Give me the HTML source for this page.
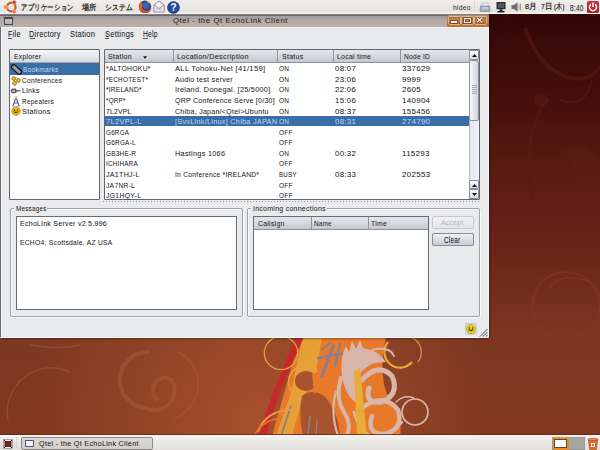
<!DOCTYPE html>
<html><head><meta charset="utf-8">
<style>
*{margin:0;padding:0;box-sizing:border-box}
html,body{width:600px;height:450px;overflow:hidden;font-family:"Liberation Sans",sans-serif}
body{position:relative;background:#6a2616}
.a{position:absolute}
.t{position:absolute;white-space:nowrap;transform-origin:0 50%;-webkit-text-stroke:0.04px currentColor}
#wall{left:0;top:0;width:600px;height:450px;background:linear-gradient(180deg,#2c0505 0%,#3e0c08 20%,#5a1a10 45%,#7a3220 70%,#8c4028 100%)}
</style></head><body>
<svg class="a" style="left:0;top:0" width="600" height="450" viewBox="0 0 600 450">
<defs>
 <linearGradient id="bg" x1="0" y1="0" x2="0" y2="1">
  <stop offset="0" stop-color="#2e0606"/>
  <stop offset="0.22" stop-color="#460f0a"/>
  <stop offset="0.40" stop-color="#5c1c13"/>
  <stop offset="0.58" stop-color="#6c2618"/>
  <stop offset="0.76" stop-color="#7e3822"/>
  <stop offset="1" stop-color="#82381f"/>
 </linearGradient>
 <radialGradient id="glow" cx="260" cy="420" r="230" gradientUnits="userSpaceOnUse">
  <stop offset="0" stop-color="#a8502c" stop-opacity="1"/>
  <stop offset="1" stop-color="#a4522c" stop-opacity="0"/>
 </radialGradient>
</defs>
<rect width="600" height="450" fill="url(#bg)"/>
<rect width="600" height="450" fill="url(#glow)"/>
<!-- faint swirls -->
<g fill="none" stroke="#a85c38" stroke-opacity="0.5">
 <path d="M158 400 A12 12 0 1 1 172 380 A20 20 0 0 1 146 408 A28 28 0 0 1 150 352" stroke-width="4"/>
 <path d="M178 352 A36 36 0 0 1 175 418" stroke-width="1.5"/>
 <path d="M8 420 A44 44 0 0 1 70 372" stroke-width="1.5"/>
 <path d="M30 345 Q60 350 80 345" stroke-width="1.5"/>
</g>
<g fill="none" stroke="#5a1a14" stroke-opacity="0.6">
 <path d="M525 28 Q540 70 570 78 Q592 82 600 66" stroke-width="4"/>
 <path d="M548 98 Q522 130 532 200" stroke-width="3"/>
 <path d="M560 100 Q585 110 592 80" stroke-width="2"/>
</g>
<circle cx="541" cy="100" r="7" fill="#5a1a14" opacity="0.5"/>
<path d="M565 150 Q585 140 600 160 L600 200 Q580 195 565 150Z" fill="#5e1e16" opacity="0.45"/>
<g fill="none" stroke="#8a3626" stroke-opacity="0.55">
 <circle cx="566" cy="306" r="34" stroke-width="2.2"/>
 <path d="M548 290 Q560 270 590 282" stroke-width="1.5"/>
</g>
<!-- central art -->
<path d="M300 337 L386 337 Q380 360 384 385 Q388 400 398 412 Q402 428 400 436 L272 436 Z" fill="#e8782a"/>
<path d="M303 337 L322 337 L316 372 L302 400 L292 436 L276 436 L290 396 Z" fill="#e6a038"/>
<path d="M296 337 L304 337 L280 390 L266 436 L258 436 L274 390 Z" fill="#c6282c"/>
<path d="M302 396 Q312 388 324 396 Q338 410 340 436 L303 436 Q298 414 302 396Z" fill="#a8522e"/>
<ellipse cx="306" cy="381" rx="11" ry="10" fill="#a8522e"/>
<path d="M312 372 Q322 376 322 388 L314 394 Z" fill="#e8782a"/>
<g fill="none" stroke="#8c7e88" stroke-linecap="round">
 <path d="M333 346 L322 376" stroke-width="3"/>
 <path d="M340 344 L335 366" stroke-width="2.5"/>
 <path d="M318 358 L346 353" stroke-width="2.4"/>
 <path d="M322 350 L330 343" stroke-width="2"/>
 <path d="M281 436 L291 406" stroke-width="1.8"/>
 <path d="M308 436 L310 416" stroke-width="1.6"/>
 <path d="M316 436 L317 420" stroke-width="1.4"/>
</g>
<g fill="none" stroke-width="1.3">
 <circle cx="281" cy="353" r="16.7" stroke="#e0a040"/>
 <path d="M292 392 A14 14 0 0 1 318 372" stroke="#eaa040" stroke-width="1.5"/>
 <path d="M388 342 A13 13 0 0 0 412 362" stroke="#e8a838" stroke-width="2.2"/>
 <path d="M398 338 A16 16 0 0 1 418 362" stroke="#d89040"/>
 <path d="M258 432 Q266 410 292 410" stroke="#e89a40" stroke-width="2"/>
 <path d="M254 436 Q262 420 282 418" stroke="#e8762a" stroke-width="1.5"/>
</g>
<path d="M342 376 Q340 356 346 346 L349 352 L352 341 L356 349 L360 340 L363 348 Q378 350 386 362 L374 363 Q362 368 358 378 Q354 392 360 404 Q346 400 342 376Z" fill="#d8b6aa"/>
<g fill="none" stroke="#d8b6aa" stroke-linecap="round">
 <path d="M341 378 Q335 398 344 412 Q352 424 347 436" stroke-width="4"/>
 <path d="M362 380 Q378 362 392 376 Q400 394 382 402 Q364 404 369 388" stroke-width="5"/>
 <path d="M362 408 Q384 392 398 410 Q404 430 384 434 Q366 434 372 416" stroke-width="4.5"/>
 <path d="M336 392 Q330 412 338 436" stroke-width="2.2"/>
 <path d="M354 412 Q358 428 370 436" stroke-width="3"/>
 <path d="M378 436 Q394 434 402 422" stroke-width="2.5"/>
 <circle cx="415" cy="412" r="13" stroke-width="1.7"/>
 <path d="M396 402 Q404 394 414 398" stroke-width="1.5"/>
 <path d="M372 350 Q390 346 394 356" stroke-width="2"/>
</g>
<path d="M354 372 L360 368 L367 436 L357 436Z" fill="#e8ac38"/>
</svg>
<div class="a" style="left:0;top:0;width:600px;height:14px;background:linear-gradient(#f1efec,#e6e3df 80%,#f6f5f3)"></div>
<div class="a" style="left:0;top:13px;width:600px;height:1px;background:#f8f7f5"></div>
<svg class="a" style="left:3px;top:0px" width="15" height="14" viewBox="0 0 15 14">
 <circle cx="8.3" cy="7" r="4.3" fill="none" stroke="#cf5a22" stroke-width="2.2"/>
 <circle cx="2.6" cy="7" r="1.9" fill="#f08a2a" stroke="#e8e6e2" stroke-width="0.6"/>
 <circle cx="11.2" cy="2.2" r="1.9" fill="#c8281a" stroke="#e8e6e2" stroke-width="0.6"/>
 <circle cx="11.2" cy="11.8" r="1.9" fill="#e8702a" stroke="#e8e6e2" stroke-width="0.6"/>
</svg>
<svg class="a" style="left:138px;top:0px" width="14" height="14" viewBox="0 0 14 14">
 <circle cx="7" cy="6.8" r="6.2" fill="#2b4690"/>
 <circle cx="8" cy="5.8" r="3.2" fill="#3c62b0"/>
 <path d="M3 1.8 C0.6 4 0.4 8.5 2.6 11 C4.8 13.6 9.4 13.8 12 11.2 C13 10 13.3 9 13.2 8 C12 10.6 8.6 11.8 6 10.2 C4 8.8 3.6 6.2 4.8 4.2 C4.2 3.4 3.4 2.6 3 1.8Z" fill="#e0601c"/>
 <path d="M2.6 11 C4.8 13.6 9.4 13.8 12 11.2 C9.6 12.4 6 12.6 3.8 10.6Z" fill="#c83a14"/>
 <path d="M8.4 0.6 C10.8 0.9 12.8 2.4 13.2 4.6 C12 3.4 10.6 2.8 9.6 2.8Z" fill="#f0b030"/>
</svg>
<svg class="a" style="left:153px;top:0px" width="12" height="13" viewBox="0 0 12 13">
 <path d="M1 5 L6 1 L11 5 L11 12 L1 12Z" fill="#f0eef2" stroke="#8a8292" stroke-width="0.9"/>
 <path d="M1 5 L6 8.5 L11 5" fill="none" stroke="#8a8292" stroke-width="0.8"/>
 <path d="M3.2 9 L8.8 9" stroke="#a8a0b0" stroke-width="1"/>
</svg>
<svg class="a" style="left:166.5px;top:0.5px" width="13" height="13" viewBox="0 0 13 13">
 <circle cx="6.5" cy="6.5" r="6" fill="#1f4c9e"/>
 <circle cx="6.5" cy="6.5" r="5.9" fill="none" stroke="#0f2a6a" stroke-width="0.6"/>
 <text x="6.6" y="10.4" font-family="Liberation Sans" font-weight="bold" font-size="10" fill="#fff" text-anchor="middle">?</text>
</svg>
<div class="a" style="left:474px;top:1px;width:1px;height:12px;background:repeating-linear-gradient(#c8c4c0 0 1px,transparent 1px 2px)"></div>
<svg class="a" style="left:479px;top:1px" width="12" height="12" viewBox="0 0 12 12">
 <path d="M1.5 5 L10.5 5 L11 10.5 L1 10.5Z" fill="#a6b2c2" stroke="#6a7486" stroke-width="0.6"/>
 <rect x="3" y="2" width="6" height="3" fill="#e8ecf0" stroke="#8a94a4" stroke-width="0.5"/>
 <rect x="3.5" y="6.5" width="5" height="1" fill="#e0e6ee"/>
</svg>
<svg class="a" style="left:495px;top:1px" width="12" height="12" viewBox="0 0 12 12">
 <rect x="1.5" y="1" width="9" height="7.2" fill="#2a2a2a"/>
 <rect x="2.8" y="2.2" width="6.4" height="4.8" fill="#4a5868"/>
 <rect x="4.5" y="8.2" width="3" height="1.8" fill="#333"/>
 <rect x="2.5" y="10" width="7" height="1.5" fill="#1e1e1e"/>
</svg>
<svg class="a" style="left:510px;top:1px" width="12" height="12" viewBox="0 0 12 12">
 <path d="M1.5 4 L4 4 L7.5 1.2 L7.5 10.8 L4 8 L1.5 8Z" fill="#6e6e6e"/>
 <path d="M9 3.5 L9 8.5 M10.5 2.5 L10.5 9.5" stroke="#8a8a8a" stroke-width="0.8"/>
</svg>
<div class="a" style="left:587px;top:1px;width:12px;height:12px;background:linear-gradient(#d83040,#b81828);border-radius:1.5px"></div>
<svg class="a" style="left:587px;top:1px" width="12" height="12" viewBox="0 0 12 12">
 <path d="M3.9 3.4 A3.5 3.5 0 1 0 8.1 3.4" fill="none" stroke="#fff" stroke-width="1.5"/>
 <path d="M6 1.6 L6 6" stroke="#fff" stroke-width="1.6"/>
</svg>
<div class="a" style="left:0;top:14px;width:489px;height:324px;background:#e9eaec;border-radius:0 0 3px 3px;box-shadow:1px 1px 2px rgba(0,0,0,0.35)"></div>
<div class="a" style="left:0;top:14px;width:489px;height:2px;background:linear-gradient(#8a848a,#625c66)"></div>
<div class="a" style="left:0;top:16px;width:489px;height:10px;background:linear-gradient(#a39b9c,#b3a9a8 50%,#bdb0a9)"></div>
<div class="a" style="left:0;top:26px;width:489px;height:1px;background:#b2aaaa"></div>
<div class="a" style="left:0;top:27px;width:489px;height:1px;background:#f4f4f6"></div>
<div class="a" style="left:0;top:27px;width:1px;height:310px;background:#6e6c6c"></div>
<div class="a" style="left:1px;top:27px;width:1px;height:310px;background:#f6f6f6"></div>
<div class="a" style="left:487.5px;top:27px;width:1.5px;height:310px;background:#f8f8f8"></div>
<div class="a" style="left:0;top:336.5px;width:489px;height:1.5px;background:#f8f8f8;border-radius:0 0 3px 3px"></div>

<div class="a" style="left:3.5px;top:17px;width:9px;height:7.5px;border:1px solid #4a464e;border-top-width:2px;background:linear-gradient(#c4c0c4,#b4b0b4)"></div>
<div class="a" style="left:447px;top:15px;width:41.5px;height:11.5px;background:linear-gradient(#b8885e,#c47a3c 50%,#b8682a 80%,#c87a3a);border-radius:2px 2px 0 0"></div>
<div class="a" style="left:448px;top:15.5px;width:12.5px;height:9.5px;border:1px solid rgba(230,205,185,0.75);border-radius:1.5px;box-shadow:inset 0 0 0 0.5px rgba(120,70,40,0.5)"></div>
<div class="a" style="left:461px;top:15.5px;width:12.5px;height:9.5px;border:1px solid rgba(230,205,185,0.75);border-radius:1.5px;box-shadow:inset 0 0 0 0.5px rgba(120,70,40,0.5)"></div>
<div class="a" style="left:474px;top:15.5px;width:13px;height:9.5px;border:1px solid rgba(230,205,185,0.75);border-radius:1.5px;box-shadow:inset 0 0 0 0.5px rgba(120,70,40,0.5)"></div>
<div class="a" style="left:451px;top:21px;width:5.5px;height:2px;background:#f4eee8;box-shadow:0 0 0 0.6px #5a4030"></div>
<div class="a" style="left:463.5px;top:17.5px;width:7px;height:5px;border:1.3px solid #f0e8e0;box-shadow:0 0 0 0.6px #5a4030, inset 0 0 0 0.6px #5a4030"></div>
<svg class="a" style="left:476px;top:17px" width="7" height="6" viewBox="0 0 7 6"><path d="M1 0.8 L6 5.2 M6 0.8 L1 5.2" stroke="#5a4030" stroke-width="2.4"/><path d="M1 0.8 L6 5.2 M6 0.8 L1 5.2" stroke="#f4eee8" stroke-width="1.4"/></svg>
<div class="a" style="left:7.8px;top:37.9px;width:4px;height:0.8px;background:#555"></div>
<div class="a" style="left:29.6px;top:37.9px;width:5.2px;height:0.8px;background:#555"></div>
<div class="a" style="left:104.8px;top:37.9px;width:4.6px;height:0.8px;background:#555"></div>
<div class="a" style="left:143px;top:37.9px;width:5px;height:0.8px;background:#555"></div>
<div class="a" style="left:9px;top:49px;width:91px;height:151px;background:#fff;border:1px solid #62666e;border-radius:1px"></div>
<div class="a" style="left:10px;top:50px;width:89px;height:12.8px;background:linear-gradient(#f4f5f7,#e6e8ec 50%,#d6d8de);border-bottom:1px solid #a4a8b0"></div>
<div class="a" style="left:10px;top:63px;width:89px;height:11.6px;background:#3a6ea8"></div>
<svg class="a" style="left:10.5px;top:63.5px" width="11" height="11" viewBox="0 0 11 11">
 <rect x="-1" y="2.8" width="13" height="5.4" rx="1" transform="rotate(42 5.5 5.5)" fill="#151515"/>
 <rect x="0.6" y="4" width="9.8" height="3" transform="rotate(42 5.5 5.5)" fill="#9aa0aa"/>
</svg>
<svg class="a" style="left:10.5px;top:76px" width="10" height="10" viewBox="0 0 10 10">
 <circle cx="2.8" cy="2.6" r="1.9" fill="#f0c020" stroke="#8a6010" stroke-width="0.8"/>
 <circle cx="7.4" cy="4.4" r="1.9" fill="#f0c020" stroke="#8a6010" stroke-width="0.8"/>
 <circle cx="3.6" cy="7.3" r="1.9" fill="#f0c020" stroke="#8a6010" stroke-width="0.8"/>
</svg>
<svg class="a" style="left:10px;top:86.5px" width="11" height="8" viewBox="0 0 11 8">
 <rect x="0.8" y="1.6" width="6" height="4.6" rx="2" fill="#5a5a5a"/><rect x="2.2" y="2.9" width="3" height="2" rx="1" fill="#c8c8c8"/><rect x="6.3" y="3.2" width="4" height="1.4" fill="#6a6a6a"/>
</svg>
<svg class="a" style="left:11px;top:96px" width="10" height="11" viewBox="0 0 10 11">
 <path d="M1.8 10.5 L5 1.2 L8.2 10.5" fill="none" stroke="#3a58a8" stroke-width="1.1"/><path d="M3.2 7 L6.8 7" stroke="#3a58a8" stroke-width="0.9"/><circle cx="5" cy="1.8" r="1.2" fill="#e8e070"/>
</svg>
<svg class="a" style="left:10.5px;top:106px" width="10" height="10" viewBox="0 0 10 10">
 <circle cx="5" cy="5" r="4.3" fill="#f4c414" stroke="#c07a10" stroke-width="0.8"/>
 <circle cx="3.5" cy="4" r="0.8" fill="#4a2a00"/><circle cx="6.5" cy="4" r="0.8" fill="#4a2a00"/>
 <path d="M2.5 5.5 Q5 8.6 7.5 5.5" fill="#8a4a00" stroke="#4a2a00" stroke-width="0.6"/>
</svg>
<div class="a" style="left:103.5px;top:49px;width:376.5px;height:151px;background:#fff;border:1px solid #62666e;border-radius:1px"></div>
<div class="a" style="left:104.5px;top:50px;width:365px;height:12.8px;background:linear-gradient(#e4e6ec,#d6d9e1 50%,#c4c8d2);border-bottom:1px solid #8e929c"></div>
<div class="a" style="left:173.3px;top:50px;width:1px;height:12.5px;background:#8e929c"></div>
<div class="a" style="left:277.3px;top:50px;width:1px;height:12.5px;background:#8e929c"></div>
<div class="a" style="left:333.3px;top:50px;width:1px;height:12.5px;background:#8e929c"></div>
<div class="a" style="left:400px;top:50px;width:1px;height:12.5px;background:#8e929c"></div>
<svg class="a" style="left:143.2px;top:56.2px" width="4" height="3" viewBox="0 0 4 3"><path d="M0 0.2 L4 0.2 L2 2.8Z" fill="#111"/></svg>
<div class="a" style="left:104.5px;top:115.75px;width:365px;height:10.57px;background:#3a6ea8"></div>
<div class="a" style="left:469px;top:50px;width:10px;height:149px;background:linear-gradient(90deg,#e4e6ea,#f2f3f6);border-left:1px solid #b4b8c0"></div>
<div class="a" style="left:469px;top:50px;width:10px;height:10px;background:linear-gradient(#fbfbfc,#dadde3);border:1px solid #8a8e98;border-radius:1px"></div>
<svg class="a" style="left:471.5px;top:53.5px" width="5" height="3" viewBox="0 0 5 3"><path d="M0 3 L5 3 L2.5 0Z" fill="#111"/></svg>
<div class="a" style="left:469px;top:59.7px;width:10px;height:61px;background:linear-gradient(90deg,#f8f9fb,#e2e4ea 60%,#cfd2da);border:1px solid #8e929c;border-radius:2px"></div>
<div class="a" style="left:471.5px;top:85px;width:5px;height:10px;background:repeating-linear-gradient(#a4a8b2 0 1px,transparent 1px 2px)"></div>
<div class="a" style="left:469px;top:180.2px;width:10px;height:9.3px;background:linear-gradient(#fbfbfc,#d6d9df);border:1px solid #8a8e98;border-radius:1px"></div>
<svg class="a" style="left:471.5px;top:183.5px" width="5" height="3" viewBox="0 0 5 3"><path d="M0 3 L5 3 L2.5 0Z" fill="#111"/></svg>
<div class="a" style="left:469px;top:189.3px;width:10px;height:9.7px;background:linear-gradient(#fbfbfc,#d6d9df);border:1px solid #8a8e98;border-radius:1px"></div>
<svg class="a" style="left:471.5px;top:192.8px" width="5" height="3" viewBox="0 0 5 3"><path d="M0 0 L5 0 L2.5 3Z" fill="#111"/></svg>
<div class="a" style="left:102.8px;top:201px;width:377px;height:1px;background:repeating-linear-gradient(90deg,#9a9ea6 0 1px,transparent 1px 3px)"></div>
<div class="a" style="left:9.5px;top:207.5px;width:233.5px;height:109.3px;border:1px solid #9ea2aa;border-radius:2px;box-shadow:inset 1px 1px 0 #fafafa,1px 1px 0 #fafafa"></div>
<div class="a" style="left:14px;top:204px;width:33px;height:8px;background:#e9eaec"></div>
<div class="a" style="left:16px;top:216px;width:221px;height:94px;background:#fff;border:1px solid #686c74"></div>
<div class="a" style="left:247px;top:207.5px;width:233px;height:109.3px;border:1px solid #9ea2aa;border-radius:2px;box-shadow:inset 1px 1px 0 #fafafa,1px 1px 0 #fafafa"></div>
<div class="a" style="left:251px;top:204px;width:76px;height:8px;background:#e9eaec"></div>
<div class="a" style="left:253px;top:216px;width:176px;height:94px;background:#fff;border:1px solid #686c74"></div>
<div class="a" style="left:254px;top:217px;width:174px;height:12.5px;background:linear-gradient(#e4e6ec,#d6d9e1 50%,#c4c8d2);border-bottom:1px solid #8e929c"></div>
<div class="a" style="left:310.5px;top:217px;width:1px;height:12px;background:#8e929c"></div>
<div class="a" style="left:367.5px;top:217px;width:1px;height:12px;background:#8e929c"></div>
<div class="a" style="left:432px;top:215.8px;width:42px;height:13.4px;background:linear-gradient(#f2f2f4,#e4e5e8);border:1px solid #c6c8ce;border-radius:2px"></div>
<div class="a" style="left:432px;top:233.1px;width:42px;height:13.4px;background:linear-gradient(#f0f1f5,#d8dbe3 60%,#c8ccd6);border:1px solid #888c96;border-radius:2px"></div>
<svg class="a" style="left:465px;top:323px" width="12" height="12" viewBox="0 0 12 12">
 <rect x="0.3" y="0.3" width="11.4" height="11.4" rx="1" fill="#d4d8e6" stroke="#b6bac6" stroke-width="0.6"/>
 <circle cx="6" cy="6.2" r="4.4" fill="#f2d80c" stroke="#b08a10" stroke-width="0.7"/>
 <circle cx="4.4" cy="5" r="0.8" fill="#3a2a00"/><circle cx="7.6" cy="5" r="0.8" fill="#3a2a00"/>
 <path d="M3.3 6.6 Q6 9.6 8.7 6.6" fill="#6a4a00" stroke="#3a2a00" stroke-width="0.7"/>
</svg>
<svg class="a" style="left:479px;top:328px" width="9" height="9" viewBox="0 0 9 9">
 <path d="M8.5 1 L1 8.5 M8.5 4 L4 8.5 M8.5 7 L7 8.5" stroke="#4a4a4a" stroke-width="1"/>
</svg>
<div class="a" style="left:0;top:433.5px;width:600px;height:1.5px;background:#6a2616;opacity:0.8"></div>
<div class="a" style="left:0;top:435px;width:600px;height:15px;background:linear-gradient(#f6f4f2,#eae8e5 50%,#e2e0dc)"></div>
<svg class="a" style="left:2.5px;top:438.5px" width="10" height="10" viewBox="0 0 10 10">
 <rect x="0.5" y="0.5" width="9" height="9" fill="#eee" stroke="#777" stroke-width="0.6"/>
 <rect x="1.5" y="2" width="7" height="6" fill="#6e2424"/>
 <path d="M1 1 L3 3 M9 1 L7 3 M1 9 L3 7 M9 9 L7 7" stroke="#222" stroke-width="1"/>
</svg>
<div class="a" style="left:16px;top:437px;width:1px;height:12px;background:repeating-linear-gradient(#c8c4c0 0 1px,transparent 1px 2px)"></div>
<div class="a" style="left:20.5px;top:436.5px;width:132.5px;height:13.5px;background:linear-gradient(#dcdad6,#d0cdc8);border:1px solid #8e8a86;border-radius:2px"></div>
<div class="a" style="left:25px;top:439.5px;width:8.5px;height:7.5px;border:1px solid #5a5a6a;border-top:1.5px solid #3a5aa8;background:#f4f4f8"></div>
<div class="a" style="left:552px;top:436.5px;width:32.5px;height:13.5px;background:#a8a6a4;border:1px solid #9a9894"></div>
<div class="a" style="left:552.5px;top:437px;width:16px;height:12.5px;background:#e0902a"></div>
<div class="a" style="left:554px;top:438.5px;width:12.5px;height:9px;background:#fff;border:1px solid #5a4a3a"></div>
<svg class="a" style="left:587px;top:437px" width="12" height="13" viewBox="0 0 12 13">
 <path d="M1.5 3 L10.5 3 L9.5 12.5 L2.5 12.5Z" fill="#e06a2a" stroke="#a84a1a" stroke-width="0.6"/>
 <rect x="1" y="1.5" width="10" height="2" rx="1" fill="#f08a3a" stroke="#a84a1a" stroke-width="0.5"/>
 <rect x="4" y="6" width="4" height="4" fill="#fff"/><rect x="5" y="7" width="2" height="2" fill="#e06a2a"/>
</svg>
<div class="t" style="left:21.00px;top:3.58px;font-size:7.8px;line-height:8.97px;color:#202020;transform:scaleX(0.794);letter-spacing:0.3px;-webkit-text-stroke:0.25px #202020;">アプリケーション</div>
<div class="t" style="left:81.70px;top:3.58px;font-size:7.8px;line-height:8.97px;color:#202020;transform:scaleX(0.895);letter-spacing:0.3px;-webkit-text-stroke:0.25px #202020;">場所</div>
<div class="t" style="left:105.00px;top:3.58px;font-size:7.8px;line-height:8.97px;color:#202020;transform:scaleX(0.833);letter-spacing:0.3px;-webkit-text-stroke:0.25px #202020;">システム</div>
<div class="t" style="left:452.50px;top:2.88px;font-size:8px;line-height:9.20px;color:#2e2e2e;transform:scaleX(0.842);letter-spacing:0.3px;">hideo</div>
<div class="t" style="left:525.00px;top:3.49px;font-size:7.6px;line-height:8.74px;color:#202020;transform:scaleX(0.958);letter-spacing:0.3px;-webkit-text-stroke:0.2px #202020;">8月</div>
<div class="t" style="left:541.00px;top:3.49px;font-size:7.6px;line-height:8.74px;color:#202020;transform:scaleX(0.918);letter-spacing:0.3px;-webkit-text-stroke:0.2px #202020;">7日</div>
<div class="t" style="left:553.50px;top:3.49px;font-size:7.6px;line-height:8.74px;color:#202020;transform:scaleX(0.768);letter-spacing:0.3px;-webkit-text-stroke:0.2px #202020;">(木)</div>
<div class="t" style="left:569.70px;top:2.57px;font-size:9px;line-height:10.35px;color:#202020;transform:scaleX(0.728);letter-spacing:0.3px;">8:40</div>
<div class="t" style="left:173.00px;top:16.78px;font-size:7.8px;line-height:8.97px;color:#2a2222;transform:scaleX(1.000);letter-spacing:0.56px;">Qtel - the Qt EchoLink Client</div>
<div class="t" style="left:7.50px;top:30.48px;font-size:8.2px;line-height:9.43px;color:#141414;transform:scaleX(0.886);letter-spacing:0.3px;">File</div>
<div class="t" style="left:29.30px;top:30.48px;font-size:8.2px;line-height:9.43px;color:#141414;transform:scaleX(0.896);letter-spacing:0.3px;">Directory</div>
<div class="t" style="left:69.90px;top:30.48px;font-size:8.2px;line-height:9.43px;color:#141414;transform:scaleX(0.909);letter-spacing:0.3px;">Station</div>
<div class="t" style="left:104.50px;top:30.48px;font-size:8.2px;line-height:9.43px;color:#141414;transform:scaleX(0.909);letter-spacing:0.3px;">Settings</div>
<div class="t" style="left:142.70px;top:30.48px;font-size:8.2px;line-height:9.43px;color:#141414;transform:scaleX(0.823);letter-spacing:0.3px;">Help</div>
<div class="t" style="left:13.90px;top:52.48px;font-size:8px;line-height:9.20px;color:#1a1a1a;transform:scaleX(0.849);letter-spacing:0.3px;">Explorer</div>
<div class="t" style="left:22.80px;top:64.58px;font-size:8px;line-height:9.20px;color:#c0d6f2;transform:scaleX(0.832);letter-spacing:0.3px;">Bookmarks</div>
<div class="t" style="left:21.70px;top:76.08px;font-size:8px;line-height:9.20px;color:#1a1a1a;transform:scaleX(0.827);letter-spacing:0.3px;">Conferences</div>
<div class="t" style="left:21.70px;top:86.18px;font-size:8px;line-height:9.20px;color:#1a1a1a;transform:scaleX(0.875);letter-spacing:0.3px;">Links</div>
<div class="t" style="left:21.70px;top:97.08px;font-size:8px;line-height:9.20px;color:#1a1a1a;transform:scaleX(0.806);letter-spacing:0.3px;">Repeaters</div>
<div class="t" style="left:21.70px;top:107.38px;font-size:8px;line-height:9.20px;color:#1a1a1a;transform:scaleX(0.913);letter-spacing:0.3px;">Stations</div>
<div class="t" style="left:107.50px;top:52.48px;font-size:8px;line-height:9.20px;color:#1a1a1a;transform:scaleX(0.891);letter-spacing:0.3px;">Station</div>
<div class="t" style="left:176.60px;top:52.48px;font-size:8px;line-height:9.20px;color:#1a1a1a;transform:scaleX(0.915);letter-spacing:0.3px;">Location/Description</div>
<div class="t" style="left:282.00px;top:52.48px;font-size:8px;line-height:9.20px;color:#1a1a1a;transform:scaleX(0.881);letter-spacing:0.3px;">Status</div>
<div class="t" style="left:336.80px;top:52.48px;font-size:8px;line-height:9.20px;color:#1a1a1a;transform:scaleX(0.865);letter-spacing:0.3px;">Local time</div>
<div class="t" style="left:403.50px;top:52.48px;font-size:8px;line-height:9.20px;color:#1a1a1a;transform:scaleX(0.828);letter-spacing:0.3px;">Node ID</div>
<div class="t" style="left:105.80px;top:64.27px;font-size:8px;line-height:9.20px;color:#1a1a1a;transform:scaleX(0.852);letter-spacing:0.3px;">*ALTOHOKU*</div>
<div class="t" style="left:175.30px;top:64.27px;font-size:8px;line-height:9.20px;color:#1a1a1a;transform:scaleX(0.951);letter-spacing:0.3px;">ALL Tohoku-Net [41/159]</div>
<div class="t" style="left:279.30px;top:64.27px;font-size:8px;line-height:9.20px;color:#1a1a1a;transform:scaleX(0.812);letter-spacing:0.3px;">ON</div>
<div class="t" style="left:334.60px;top:64.27px;font-size:8px;line-height:9.20px;color:#1a1a1a;transform:scaleX(0.979);letter-spacing:0.3px;">08:07</div>
<div class="t" style="left:402.00px;top:64.27px;font-size:8px;line-height:9.20px;color:#1a1a1a;transform:scaleX(0.994);letter-spacing:0.3px;">337629</div>
<div class="t" style="left:105.80px;top:74.84px;font-size:8px;line-height:9.20px;color:#1a1a1a;transform:scaleX(0.800);letter-spacing:0.3px;">*ECHOTEST*</div>
<div class="t" style="left:175.30px;top:74.84px;font-size:8px;line-height:9.20px;color:#1a1a1a;transform:scaleX(0.890);letter-spacing:0.3px;">Audio test server</div>
<div class="t" style="left:279.30px;top:74.84px;font-size:8px;line-height:9.20px;color:#1a1a1a;transform:scaleX(0.812);letter-spacing:0.3px;">ON</div>
<div class="t" style="left:334.60px;top:74.84px;font-size:8px;line-height:9.20px;color:#1a1a1a;transform:scaleX(0.979);letter-spacing:0.3px;">23:06</div>
<div class="t" style="left:402.00px;top:74.84px;font-size:8px;line-height:9.20px;color:#1a1a1a;transform:scaleX(0.999);letter-spacing:0.3px;">9999</div>
<div class="t" style="left:105.80px;top:85.41px;font-size:8px;line-height:9.20px;color:#1a1a1a;transform:scaleX(0.820);letter-spacing:0.3px;">*IRELAND*</div>
<div class="t" style="left:175.30px;top:85.41px;font-size:8px;line-height:9.20px;color:#1a1a1a;transform:scaleX(0.913);letter-spacing:0.3px;">Ireland. Donegal. [25/5000]</div>
<div class="t" style="left:279.30px;top:85.41px;font-size:8px;line-height:9.20px;color:#1a1a1a;transform:scaleX(0.812);letter-spacing:0.3px;">ON</div>
<div class="t" style="left:334.60px;top:85.41px;font-size:8px;line-height:9.20px;color:#1a1a1a;transform:scaleX(0.979);letter-spacing:0.3px;">22:06</div>
<div class="t" style="left:402.00px;top:85.41px;font-size:8px;line-height:9.20px;color:#1a1a1a;transform:scaleX(0.999);letter-spacing:0.3px;">2605</div>
<div class="t" style="left:105.80px;top:95.98px;font-size:8px;line-height:9.20px;color:#1a1a1a;transform:scaleX(0.787);letter-spacing:0.3px;">*QRP*</div>
<div class="t" style="left:175.30px;top:95.98px;font-size:8px;line-height:9.20px;color:#1a1a1a;transform:scaleX(0.875);letter-spacing:0.3px;">QRP Conference Serve [0/30]</div>
<div class="t" style="left:279.30px;top:95.98px;font-size:8px;line-height:9.20px;color:#1a1a1a;transform:scaleX(0.812);letter-spacing:0.3px;">ON</div>
<div class="t" style="left:334.60px;top:95.98px;font-size:8px;line-height:9.20px;color:#1a1a1a;transform:scaleX(0.979);letter-spacing:0.3px;">15:06</div>
<div class="t" style="left:402.00px;top:95.98px;font-size:8px;line-height:9.20px;color:#1a1a1a;transform:scaleX(0.994);letter-spacing:0.3px;">140904</div>
<div class="t" style="left:105.80px;top:106.55px;font-size:8px;line-height:9.20px;color:#1a1a1a;transform:scaleX(0.847);letter-spacing:0.3px;">7L2VPL</div>
<div class="t" style="left:175.30px;top:106.55px;font-size:8px;line-height:9.20px;color:#1a1a1a;transform:scaleX(0.879);letter-spacing:0.3px;">Chiba, Japan/&lt;Qtel&gt;Ubuntu</div>
<div class="t" style="left:279.30px;top:106.55px;font-size:8px;line-height:9.20px;color:#1a1a1a;transform:scaleX(0.812);letter-spacing:0.3px;">ON</div>
<div class="t" style="left:334.60px;top:106.55px;font-size:8px;line-height:9.20px;color:#1a1a1a;transform:scaleX(0.979);letter-spacing:0.3px;">08:37</div>
<div class="t" style="left:402.00px;top:106.55px;font-size:8px;line-height:9.20px;color:#1a1a1a;transform:scaleX(0.994);letter-spacing:0.3px;">155456</div>
<div class="t" style="left:105.80px;top:117.12px;font-size:8px;line-height:9.20px;color:#bcd2ee;transform:scaleX(0.942);letter-spacing:0.3px;">7L2VPL-L</div>
<div class="t" style="left:175.30px;top:117.12px;font-size:8px;line-height:9.20px;color:#bcd2ee;transform:scaleX(0.909);letter-spacing:0.3px;">[SvxLink/Linux] Chiba JAPAN</div>
<div class="t" style="left:279.30px;top:117.12px;font-size:8px;line-height:9.20px;color:#bcd2ee;transform:scaleX(0.812);letter-spacing:0.3px;">ON</div>
<div class="t" style="left:334.60px;top:117.12px;font-size:8px;line-height:9.20px;color:#bcd2ee;transform:scaleX(0.979);letter-spacing:0.3px;">08:31</div>
<div class="t" style="left:402.00px;top:117.12px;font-size:8px;line-height:9.20px;color:#bcd2ee;transform:scaleX(0.994);letter-spacing:0.3px;">274790</div>
<div class="t" style="left:105.80px;top:127.68px;font-size:8px;line-height:9.20px;color:#1a1a1a;transform:scaleX(0.787);letter-spacing:0.3px;">G6RGA</div>
<div class="t" style="left:279.30px;top:127.68px;font-size:8px;line-height:9.20px;color:#1a1a1a;transform:scaleX(0.801);letter-spacing:0.3px;">OFF</div>
<div class="t" style="left:105.80px;top:138.25px;font-size:8px;line-height:9.20px;color:#1a1a1a;transform:scaleX(0.801);letter-spacing:0.3px;">G6RGA-L</div>
<div class="t" style="left:279.30px;top:138.25px;font-size:8px;line-height:9.20px;color:#1a1a1a;transform:scaleX(0.801);letter-spacing:0.3px;">OFF</div>
<div class="t" style="left:105.80px;top:148.82px;font-size:8px;line-height:9.20px;color:#1a1a1a;transform:scaleX(0.803);letter-spacing:0.3px;">GB3HE-R</div>
<div class="t" style="left:175.30px;top:148.82px;font-size:8px;line-height:9.20px;color:#1a1a1a;transform:scaleX(0.913);letter-spacing:0.3px;">Hastings 1066</div>
<div class="t" style="left:279.30px;top:148.82px;font-size:8px;line-height:9.20px;color:#1a1a1a;transform:scaleX(0.812);letter-spacing:0.3px;">ON</div>
<div class="t" style="left:334.60px;top:148.82px;font-size:8px;line-height:9.20px;color:#1a1a1a;transform:scaleX(0.979);letter-spacing:0.3px;">00:32</div>
<div class="t" style="left:402.00px;top:148.82px;font-size:8px;line-height:9.20px;color:#1a1a1a;transform:scaleX(0.993);letter-spacing:0.3px;">115293</div>
<div class="t" style="left:105.80px;top:159.39px;font-size:8px;line-height:9.20px;color:#1a1a1a;transform:scaleX(0.786);letter-spacing:0.3px;">ICHIHARA</div>
<div class="t" style="left:279.30px;top:159.39px;font-size:8px;line-height:9.20px;color:#1a1a1a;transform:scaleX(0.801);letter-spacing:0.3px;">OFF</div>
<div class="t" style="left:105.80px;top:169.96px;font-size:8px;line-height:9.20px;color:#1a1a1a;transform:scaleX(0.887);letter-spacing:0.3px;">JA1THJ-L</div>
<div class="t" style="left:175.30px;top:169.96px;font-size:8px;line-height:9.20px;color:#1a1a1a;transform:scaleX(0.840);letter-spacing:0.3px;">In Conference *IRELAND*</div>
<div class="t" style="left:279.30px;top:169.96px;font-size:8px;line-height:9.20px;color:#1a1a1a;transform:scaleX(0.771);letter-spacing:0.3px;">BUSY</div>
<div class="t" style="left:334.60px;top:169.96px;font-size:8px;line-height:9.20px;color:#1a1a1a;transform:scaleX(0.979);letter-spacing:0.3px;">08:33</div>
<div class="t" style="left:402.00px;top:169.96px;font-size:8px;line-height:9.20px;color:#1a1a1a;transform:scaleX(0.994);letter-spacing:0.3px;">202553</div>
<div class="t" style="left:105.80px;top:180.53px;font-size:8px;line-height:9.20px;color:#1a1a1a;transform:scaleX(0.843);letter-spacing:0.3px;">JA7NR-L</div>
<div class="t" style="left:279.30px;top:180.53px;font-size:8px;line-height:9.20px;color:#1a1a1a;transform:scaleX(0.801);letter-spacing:0.3px;">OFF</div>
<div class="t" style="left:105.80px;top:191.10px;font-size:8px;line-height:9.20px;color:#1a1a1a;transform:scaleX(0.864);letter-spacing:0.3px;">JG1HQY-L</div>
<div class="t" style="left:279.30px;top:191.10px;font-size:8px;line-height:9.20px;color:#1a1a1a;transform:scaleX(0.801);letter-spacing:0.3px;">OFF</div>
<div class="t" style="left:15.50px;top:204.18px;font-size:8px;line-height:9.20px;color:#1a1a1a;transform:scaleX(0.785);letter-spacing:0.3px;">Messages</div>
<div class="t" style="left:19.50px;top:219.38px;font-size:8px;line-height:9.20px;color:#1a1a1a;transform:scaleX(0.881);letter-spacing:0.3px;">EchoLink Server v2.5.996</div>
<div class="t" style="left:19.50px;top:238.08px;font-size:8px;line-height:9.20px;color:#1a1a1a;transform:scaleX(0.843);letter-spacing:0.3px;">ECHO4: Scottsdale, AZ USA</div>
<div class="t" style="left:252.50px;top:203.88px;font-size:8px;line-height:9.20px;color:#1a1a1a;transform:scaleX(0.873);letter-spacing:0.3px;">Incoming connections</div>
<div class="t" style="left:257.50px;top:218.88px;font-size:8px;line-height:9.20px;color:#1a1a1a;transform:scaleX(0.861);letter-spacing:0.3px;">Callsign</div>
<div class="t" style="left:313.80px;top:218.88px;font-size:8px;line-height:9.20px;color:#1a1a1a;transform:scaleX(0.787);letter-spacing:0.3px;">Name</div>
<div class="t" style="left:371.30px;top:218.88px;font-size:8px;line-height:9.20px;color:#1a1a1a;transform:scaleX(0.854);letter-spacing:0.3px;">Time</div>
<div class="t" style="left:441.30px;top:218.38px;font-size:8px;line-height:9.20px;color:#b4b6bc;transform:scaleX(0.859);letter-spacing:0.3px;">Accept</div>
<div class="t" style="left:444.40px;top:235.58px;font-size:8.2px;line-height:9.43px;color:#111;transform:scaleX(0.770);letter-spacing:0.3px;">Clear</div>
<div class="t" style="left:38.50px;top:439.38px;font-size:8px;line-height:9.20px;color:#1a1a1a;transform:scaleX(0.906);letter-spacing:0.3px;">Qtel - the Qt EchoLink Client</div>
</body></html>
